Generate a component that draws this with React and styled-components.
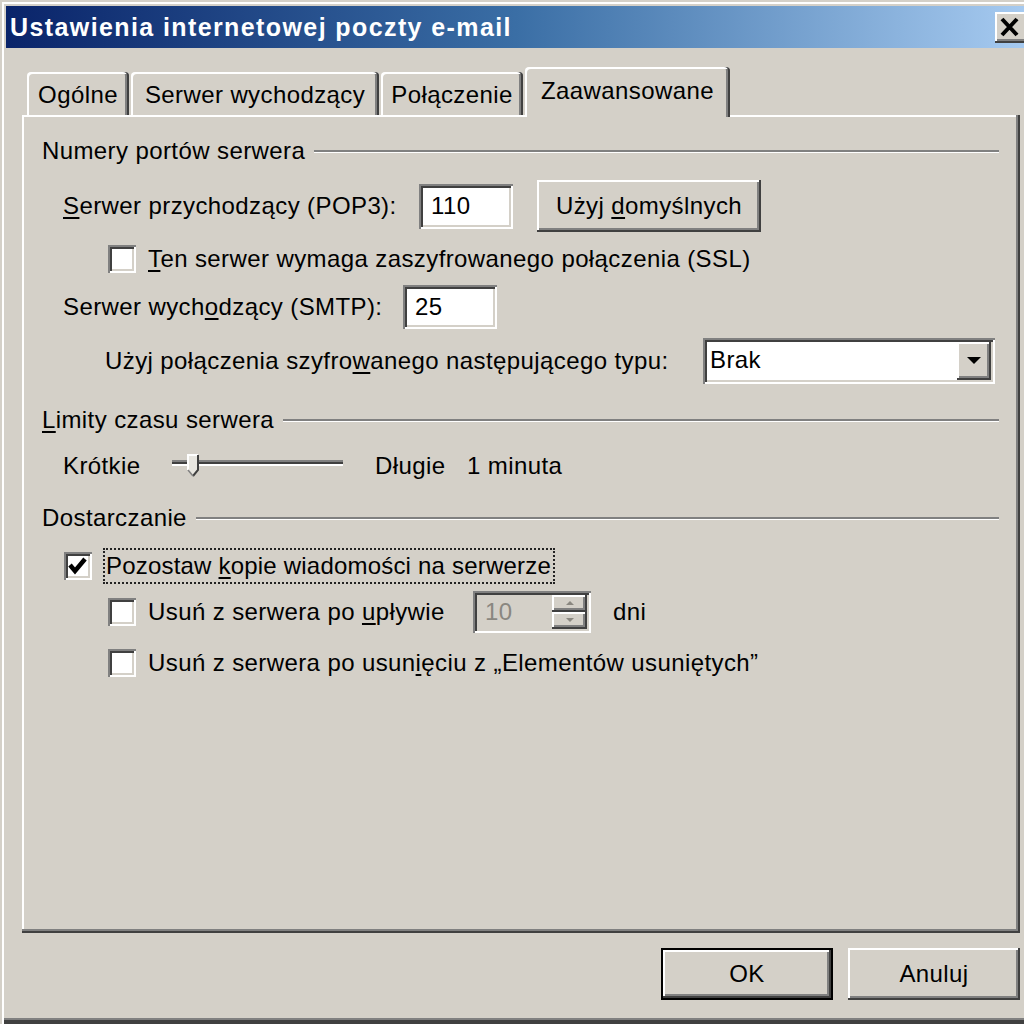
import React from 'react';
import styled, { createGlobalStyle } from 'styled-components';

const Global = createGlobalStyle`
  html, body { margin: 0; padding: 0; background: #d4d0c8; overflow: hidden; }
  body { font-family: "Liberation Sans", Arial, sans-serif; font-size: 24px; letter-spacing: 0.4px; color: #000; }
  * { box-sizing: border-box; }
`;

const FACE = '#d4d0c8';
const raised = `box-shadow: inset -2px -2px 0 #404040, inset 2px 2px 0 #ffffff, inset -4px -4px 0 #808080;`;
const sunken = `box-shadow: inset 2px 2px 0 #808080, inset -2px -2px 0 #ffffff, inset 4px 4px 0 #404040, inset -4px -4px 0 #d4d0c8;`;

const Window = styled.div`
  width: 1024px;
  height: 1024px;
  padding: 6px 0 0 6px;
  background: ${FACE};
  display: flex;
  flex-direction: column;
  overflow: hidden;
  box-shadow: inset 2px 2px 0 ${FACE}, inset 4px 4px 0 #ffffff, inset 0 -4px 0 #404040, inset 0 -6px 0 #808080;
`;

const TitleBar = styled.div`
  height: 42px;
  flex-shrink: 0;
  display: flex;
  align-items: flex-start;
  justify-content: space-between;
  padding-left: 4px;
  background: linear-gradient(to right, #0a246a 0%, #3a6ea5 50%, #a6caf0 100%);
`;

const Title = styled.span`
  color: #fff;
  font-weight: bold;
  font-size: 25px;
  letter-spacing: 1.4px;
  line-height: 42px;
  white-space: nowrap;
`;

const CloseButton = styled.div`
  width: 29px;
  height: 31px;
  margin-top: 6px;
  background: ${FACE};
  box-shadow: inset 0 -2px 0 #404040, inset 2px 2px 0 #ffffff, inset 0 -4px 0 #808080;
  display: flex;
`;

const Body = styled.div`
  flex: 1;
  display: flex;
  flex-direction: column;
  padding: 19px 4px 0 16px;
`;

const TabStrip = styled.div`
  display: flex;
  align-items: flex-end;
  gap: 2px;
  height: 50px;
  padding-left: 5px;
  margin-bottom: -2px;
  position: relative;
  z-index: 1;
`;

const Tab = styled.div`
  width: ${p => p.$w}px;
  height: ${p => (p.$active ? 50 : 43)}px;
  margin-bottom: ${p => (p.$active ? 0 : 2)}px;
  padding-bottom: ${p => (p.$active ? 6 : 0)}px;
  padding-top: 3px;
  background: ${FACE};
  border-radius: 4px 4px 0 0;
  box-shadow: inset -2px 0 0 #404040, inset 2px 2px 0 #ffffff, inset -4px 0 0 #808080;
  display: flex;
  align-items: center;
  justify-content: center;
  white-space: nowrap;
`;

const Panel = styled.div`
  height: 818px;
  flex-shrink: 0;
  background: ${FACE};
  box-shadow: inset -2px -2px 0 #404040, inset -4px -4px 0 #808080, inset 2px 2px 0 #ffffff;
  display: flex;
  flex-direction: column;
  padding: 21px 21px 0 20px;
`;

const GroupHeader = styled.div`
  display: flex;
  align-items: center;
  gap: 9px;
  height: 30px;
  margin-top: ${p => p.$top || 0}px;
  white-space: nowrap;
`;

const Etch = styled.div`
  flex: 1;
  height: 3px;
  border-top: 2px solid #808080;
  border-bottom: 1px solid #ffffff;
`;

const Row = styled.div`
  display: flex;
  align-items: center;
  height: ${p => p.$h}px;
  margin-top: ${p => p.$top}px;
  padding-left: ${p => p.$left}px;
  white-space: nowrap;
`;

const Label = styled.span`
  width: ${p => (p.$w ? `${p.$w}px` : 'auto')};
  margin-left: ${p => p.$ml || 0}px;
  flex-shrink: 0;
`;

const U = styled.span`
  text-decoration: underline;
  text-underline-offset: 3px;
`;

const TextField = styled.div`
  width: ${p => p.$w}px;
  height: ${p => p.$h}px;
  background: #fff;
  ${sunken}
  display: flex;
  align-items: center;
  padding-left: 12px;
  flex-shrink: 0;
`;

const PushButton = styled.div`
  width: ${p => p.$w}px;
  height: 52px;
  margin-left: ${p => p.$ml || 0}px;
  background: ${FACE};
  ${raised}
  display: flex;
  align-items: center;
  justify-content: center;
  flex-shrink: 0;
`;

const DefaultButton = styled(PushButton)`
  border: 2px solid #000;
`;

const Box = styled.div`
  width: 28px;
  height: 28px;
  background: #fff;
  ${sunken}
  flex-shrink: 0;
  display: flex;
`;

const FocusLabel = styled.span`
  display: block;
  width: ${p => p.$w}px;
  height: 36px;
  line-height: 32px;
  margin-left: 11px;
  padding: 0 1px;
  letter-spacing: 0.2px;
  border: 2px dotted #222;
`;

const Select = styled.div`
  width: 292px;
  height: 46px;
  background: #fff;
  ${sunken}
  padding: 4px;
  display: flex;
  align-items: center;
  justify-content: space-between;
  flex-shrink: 0;
`;

const SelectText = styled.span`
  padding-left: 3px;
  margin-top: -3px;
`;

const DropButton = styled.div`
  width: 34px;
  height: 38px;
  background: ${FACE};
  ${raised}
  display: flex;
  align-items: center;
  justify-content: center;
`;

const Spin = styled.div`
  width: 118px;
  height: 42px;
  background: ${FACE};
  ${sunken}
  padding: 4px;
  display: flex;
  align-items: center;
  justify-content: space-between;
  flex-shrink: 0;
`;

const SpinText = styled.span`
  color: #8a8780;
  padding-left: 8px;
`;

const SpinButtons = styled.div`
  width: 35px;
  height: 34px;
  display: flex;
  flex-direction: column;
`;

const SpinHalf = styled.div`
  flex: 1;
  background: ${FACE};
  ${raised}
  display: flex;
  align-items: center;
  justify-content: center;
`;

const SliderWrap = styled.div`
  width: 171px;
  height: 30px;
  flex-shrink: 0;
  display: flex;
`;

const Footer = styled.div`
  display: flex;
  justify-content: flex-end;
  gap: 15px;
  margin-top: 15px;
`;

const Check = () => (
  <svg width="28" height="28" viewBox="0 0 28 28">
    <polyline points="6,13 11,19 21,7" fill="none" stroke="#000" strokeWidth="4.5" />
  </svg>
);

const CloseX = () => (
  <svg width="29" height="31" viewBox="0 0 29 31">
    <path d="M7 7 L22 23 M22 7 L7 23" stroke="#000" strokeWidth="4" fill="none" />
  </svg>
);

const Triangle = () => (
  <svg width="14" height="8" viewBox="0 0 14 8">
    <polygon points="0,0 14,0 7,7" fill="#000" />
  </svg>
);

const SmallArrow = ({ up }) => (
  <svg width="8" height="5" viewBox="0 0 8 5">
    <polygon points={up ? '4,0 8,4 0,4' : '0,0 8,0 4,4'} fill="#8a8780" />
  </svg>
);

const SliderDrawing = () => (
  <svg width="171" height="30" viewBox="0 0 171 30">
    <rect x="0" y="9" width="171" height="2" fill="#808080" />
    <rect x="0" y="11" width="171" height="2" fill="#404040" />
    <rect x="0" y="13" width="171" height="2" fill="#ffffff" />
    <polygon points="16,4 26,4 26,19 21,25 16,19" fill="#e8e6e0" />
    <polyline points="16,19 16,4 26,4" fill="none" stroke="#ffffff" strokeWidth="2" />
    <polyline points="26,4 26,19 21,25" fill="none" stroke="#404040" strokeWidth="2" />
    <line x1="21" y1="25" x2="16" y2="19" stroke="#808080" strokeWidth="1.5" />
  </svg>
);

export default function App() {
  return (
    <>
      <Global />
      <Window>
        <TitleBar>
          <Title>Ustawienia internetowej poczty e-mail</Title>
          <CloseButton><CloseX /></CloseButton>
        </TitleBar>
        <Body>
          <TabStrip>
            <Tab $w={102}>Ogólne</Tab>
            <Tab $w={248}>Serwer wychodzący</Tab>
            <Tab $w={142}>Połączenie</Tab>
            <Tab $w={205} $active>Zaawansowane</Tab>
          </TabStrip>
          <Panel>
            <GroupHeader>
              Numery portów serwera
              <Etch />
            </GroupHeader>

            <Row $h={52} $top={14} $left={21}>
              <Label $w={356}><U>S</U>erwer przychodzący (POP3):</Label>
              <TextField $w={94} $h={45}>110</TextField>
              <PushButton $w={224} $ml={24}>Użyj&nbsp;<U>d</U>omyślnych</PushButton>
            </Row>

            <Row $h={30} $top={12} $left={66}>
              <Box />
              <Label $ml={12}><U>T</U>en serwer wymaga zaszyfrowanego połączenia (SSL)</Label>
            </Row>

            <Row $h={44} $top={11} $left={21}>
              <Label $w={340}>Serwer wych<U>o</U>dzący (SMTP):</Label>
              <TextField $w={94} $h={44}>25</TextField>
            </Row>

            <Row $h={46} $top={9} $left={63}>
              <Label $w={598}>Użyj połączenia szyfro<U>w</U>anego następującego typu:</Label>
              <Select>
                <SelectText>Brak</SelectText>
                <DropButton><Triangle /></DropButton>
              </Select>
            </Row>

            <GroupHeader $top={21}>
              <span><U>L</U>imity czasu serwera</span>
              <Etch />
            </GroupHeader>

            <Row $h={30} $top={16} $left={21}>
              <Label $w={109}>Krótkie</Label>
              <SliderWrap><SliderDrawing /></SliderWrap>
              <Label $w={92} $ml={32}>Długie</Label>
              <Label>1 minuta</Label>
            </Row>

            <GroupHeader $top={22}>
              Dostarczanie
              <Etch />
            </GroupHeader>

            <Row $h={36} $top={15} $left={22}>
              <Box><Check /></Box>
              <FocusLabel $w={452}>Pozostaw <U>k</U>opie wiadomości na serwerze</FocusLabel>
            </Row>

            <Row $h={42} $top={7} $left={66}>
              <Box />
              <Label $w={325} $ml={12}>Usuń z serwera po <U>u</U>pływie</Label>
              <Spin>
                <SpinText>10</SpinText>
                <SpinButtons>
                  <SpinHalf><SmallArrow up /></SpinHalf>
                  <SpinHalf><SmallArrow /></SpinHalf>
                </SpinButtons>
              </Spin>
              <Label $ml={22}>dni</Label>
            </Row>

            <Row $h={30} $top={15} $left={66}>
              <Box />
              <Label $ml={12}>Usuń z serwera po usun<U>i</U>ęciu z „Elementów usuniętych”</Label>
            </Row>
          </Panel>
          <Footer>
            <DefaultButton $w={172}>OK</DefaultButton>
            <PushButton $w={172}>Anuluj</PushButton>
          </Footer>
        </Body>
      </Window>
    </>
  );
}
